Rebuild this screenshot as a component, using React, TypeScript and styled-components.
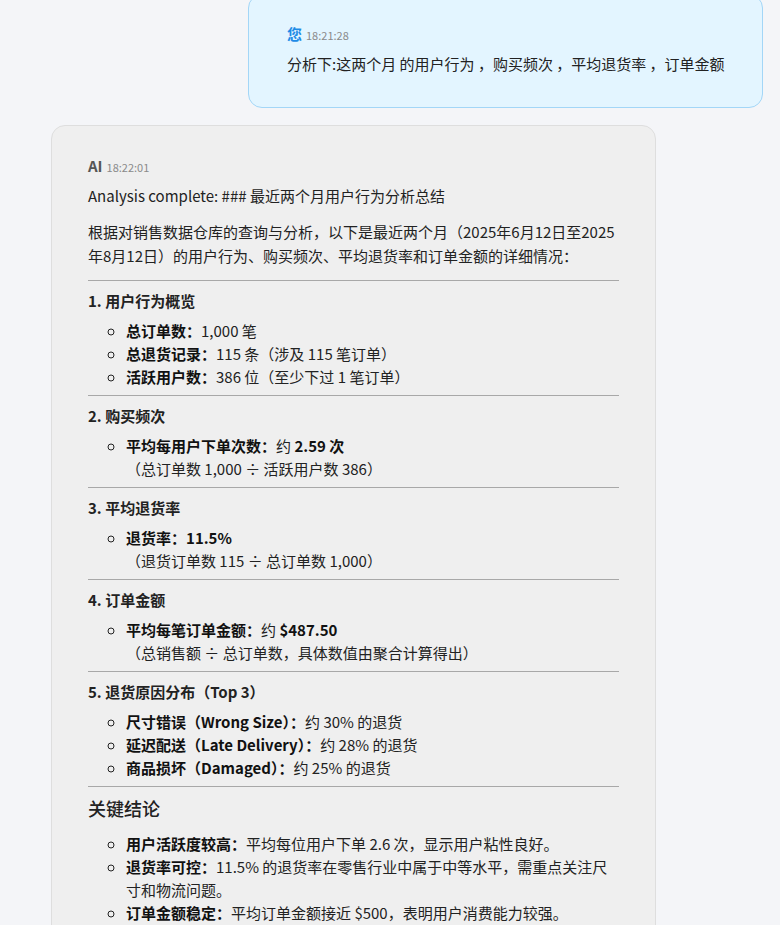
import React from "react";
import styled, { createGlobalStyle } from "styled-components";

const GlobalStyle = createGlobalStyle`
  html, body {
    margin: 0;
    padding: 0;
    background: #f4f5f8;
    font-family: "Noto Sans CJK SC", "Noto Sans", "Liberation Sans", sans-serif;
    color: #222;
  }
`;

const Page = styled.div`
  display: flex;
  flex-direction: column;
  gap: 17px;
  padding: 0 17px 0 51px;
  margin-top: -6px;
  height: 931px;
  overflow: hidden;
`;

const Bubble = styled.div<{ $user?: boolean }>`
  box-sizing: border-box;
  flex-shrink: 0;
  align-self: ${(p) => (p.$user ? "flex-end" : "flex-start")};
  width: ${(p) => (p.$user ? "515px" : "605px")};
  background: ${(p) => (p.$user ? "#e3f5ff" : "#efefef")};
  border: 1px solid ${(p) => (p.$user ? "#a3d6f7" : "#dedede")};
  border-radius: 14px;
  padding: ${(p) => (p.$user ? "28px 20px 31px 38px" : "29px 36px 20px")};
`;

const Header = styled.div`
  display: flex;
  align-items: baseline;
  gap: 4px;
  margin-bottom: 6px;
  line-height: 22px;
`;

const Name = styled.span<{ $user?: boolean }>`
  font-size: 15px;
  font-weight: 700;
  color: ${(p) => (p.$user ? "#1e8be6" : "#555")};
`;

const Time = styled.span`
  font-size: 11px;
  color: #8a8a8a;
`;

const Text = styled.p<{ $last?: boolean }>`
  margin: ${(p) => (p.$last ? "0" : "0 0 12px")};
  font-size: 15px;
  line-height: 24px;
  color: #222;
  white-space: ${(p) => (p.$last ? "nowrap" : "normal")};
`;

const Rule = styled.hr`
  border: none;
  border-top: 1px solid #a8a8a8;
  margin: 7px 0 8px;
`;

const SectionTitle = styled.div`
  font-size: 15px;
  font-weight: 700;
  line-height: 24px;
  color: #222;
`;

const BigTitle = styled.div`
  font-size: 18px;
  font-weight: 500;
  line-height: 26px;
  color: #222;
  margin: 8px 0 11px;
`;

const Items = styled.ul`
  list-style: circle;
  margin: 6px 0 7px;
  padding-left: 38px;
`;

const Item = styled.li`
  font-size: 15px;
  line-height: 23px;
  color: #222;
  & strong {
    font-weight: 700;
    color: #111;
  }
`;

type Row = { label: string; value: React.ReactNode; note?: string };

const sections: { title: string; rows: Row[] }[] = [
  {
    title: "1. 用户行为概览",
    rows: [
      { label: "总订单数", value: "1,000 笔" },
      { label: "总退货记录", value: "115 条（涉及 115 笔订单）" },
      { label: "活跃用户数", value: "386 位（至少下过 1 笔订单）" },
    ],
  },
  {
    title: "2. 购买频次",
    rows: [
      {
        label: "平均每用户下单次数",
        value: (
          <>
            约 <strong>2.59 次</strong>
          </>
        ),
        note: "（总订单数 1,000 ÷ 活跃用户数 386）",
      },
    ],
  },
  {
    title: "3. 平均退货率",
    rows: [
      {
        label: "退货率",
        value: <strong>11.5%</strong>,
        note: "（退货订单数 115 ÷ 总订单数 1,000）",
      },
    ],
  },
  {
    title: "4. 订单金额",
    rows: [
      {
        label: "平均每笔订单金额",
        value: (
          <>
            约 <strong>$487.50</strong>
          </>
        ),
        note: "（总销售额 ÷ 总订单数，具体数值由聚合计算得出）",
      },
    ],
  },
  {
    title: "5. 退货原因分布（Top 3）",
    rows: [
      { label: "尺寸错误（Wrong Size）", value: "约 30% 的退货" },
      { label: "延迟配送（Late Delivery）", value: "约 28% 的退货" },
      { label: "商品损坏（Damaged）", value: "约 25% 的退货" },
    ],
  },
];

const conclusions: Row[] = [
  { label: "用户活跃度较高", value: "平均每位用户下单 2.6 次，显示用户粘性良好。" },
  {
    label: "退货率可控",
    value: "11.5% 的退货率在零售行业中属于中等水平，需重点关注尺寸和物流问题。",
  },
  { label: "订单金额稳定", value: "平均订单金额接近 $500，表明用户消费能力较强。" },
];

const renderRow = (row: Row, i: number) => (
  <Item key={i}>
    <strong>{row.label}：</strong>
    {row.value}
    {row.note && (
      <>
        <br />
        {row.note}
      </>
    )}
  </Item>
);

export default function App() {
  return (
    <>
      <GlobalStyle />
      <Page>
        <Bubble $user>
          <Header>
            <Name $user>您</Name>
            <Time>18:21:28</Time>
          </Header>
          <Text $last>
            分析下:这两个月 的用户行为 ，购买频次 ，平均退货率 ，订单金额
          </Text>
        </Bubble>

        <Bubble>
          <Header>
            <Name>AI</Name>
            <Time>18:22:01</Time>
          </Header>
          <Text>Analysis complete: ### 最近两个月用户行为分析总结</Text>
          <Text>
            根据对销售数据仓库的查询与分析，以下是最近两个月（2025年6月12日至2025年8月12日）的用户行为、购买频次、平均退货率和订单金额的详细情况：
          </Text>
          {sections.map((s) => (
            <React.Fragment key={s.title}>
              <Rule />
              <SectionTitle>{s.title}</SectionTitle>
              <Items>{s.rows.map(renderRow)}</Items>
            </React.Fragment>
          ))}
          <Rule />
          <BigTitle>关键结论</BigTitle>
          <Items>{conclusions.map(renderRow)}</Items>
        </Bubble>
      </Page>
    </>
  );
}
